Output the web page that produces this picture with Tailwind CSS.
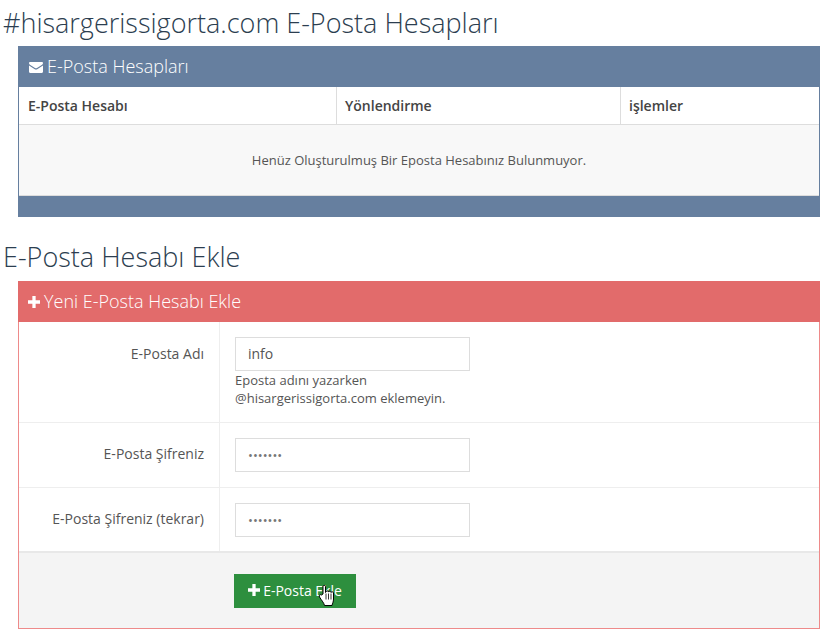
<!DOCTYPE html>
<html lang="tr">
<head>
<meta charset="utf-8">
<script src="https://cdn.jsdelivr.net/npm/@tailwindcss/browser@4"></script>
</head>
<body class="bg-white font-['Open_Sans',sans-serif] text-[14px] text-[#555] w-[829px] h-[639px] overflow-hidden relative">
<h1 class="h-[46px] pl-[3px] pt-[5px] text-[27px] leading-[36px] font-light text-[#2c3e50] whitespace-nowrap">#hisargerissigorta.com E-Posta Hesapları</h1>
<section class="ml-[18px] w-[802px] h-[171px] bg-[#667f9f] border-x border-b border-[#667f9f] flex flex-col">
  <div class="h-[41px] pl-[10px] flex items-center gap-[4px] text-white text-[18px] font-light">
    <svg class="w-[14px] h-[11px] mt-[2px]" viewBox="0 0 14 11" fill="#fff"><path d="M0 1.2C0 .5.5 0 1.2 0h11.6c.7 0 1.2.5 1.2 1.2 0 .6-.4 1.1-.9 1.5L8 6c-.6.4-1.4.4-2 0L.9 2.7C.4 2.3 0 1.8 0 1.2z"/><path d="M0 3.4V9.8c0 .7.5 1.2 1.2 1.2h11.6c.7 0 1.2-.5 1.2-1.2V3.4L8.6 7C7.600 7.700 6.400 7.700 5.400 7z"/></svg>
    <span>E-Posta Hesapları</span>
  </div>
  <div class="grid grid-cols-[318px_284px_1fr] h-[38px] bg-white border-b border-[#ddd] font-semibold text-[14px] text-[#444]">
    <div class="pl-[9px] flex items-center border-r border-[#ddd]">E-Posta Hesabı</div>
    <div class="pl-[8px] flex items-center border-r border-[#ddd]">Yönlendirme</div>
    <div class="pl-[8px] flex items-center">işlemler</div>
  </div>
  <div class="h-[71px] pt-[2px] bg-[#f8f8f8] border-b border-[#ddd] flex items-center justify-center text-[13px] text-[#555]">Henüz Oluşturulmuş Bir Eposta Hesabınız Bulunmuyor.</div>
</section>
<h2 class="h-[64px] pl-[3px] pt-[22px] text-[27px] leading-[36px] font-light text-[#2c3e50] whitespace-nowrap">E-Posta Hesabı Ekle</h2>
<section class="ml-[18px] w-[802px] h-[348px] bg-white border-x border-b border-[#ee8a8a] flex flex-col">
  <div class="-mx-px h-[41px] pl-[10px] bg-[#e26b6b] flex items-center gap-[4px] text-white text-[18px] font-light">
    <svg class="w-[12px] h-[12px] mt-[1px]" viewBox="0 0 11 11" fill="#fff"><path d="M4 0h3v4h4v3H7v4H4V7H0V4h4z"/></svg>
    <span>Yeni E-Posta Hesabı Ekle</span>
  </div>
  <form>
    <div class="grid grid-cols-[201px_1fr] h-[101px] border-b border-[#eee]">
      <div class="border-r border-[#eee] pr-[15px] pt-[23px] text-right leading-[18px]">E-Posta Adı</div>
      <div class="pl-[15px] pt-[15px]">
        <input class="block w-[235px] h-[34px] px-[12px] pb-[1px] border border-[#ddd] bg-white text-[14px] text-[#555]" value="info">
        <p class="text-[13px] leading-[18px] text-[#555]">Eposta adını yazarken<br>@hisargerissigorta.com eklemeyin.</p>
      </div>
    </div>
    <div class="grid grid-cols-[201px_1fr] h-[65px] border-b border-[#eee]">
      <div class="border-r border-[#eee] pr-[15px] pt-[22px] text-right leading-[18px]">E-Posta Şifreniz</div>
      <div class="pl-[15px] pt-[15px]"><input type="password" class="block w-[235px] h-[34px] px-[12px] border border-[#ddd] bg-white text-[13px] text-[#777]" value="1234567"></div>
    </div>
    <div class="grid grid-cols-[201px_1fr] h-[65px] border-b-2 border-[#e8e8e8]">
      <div class="border-r border-[#eee] pr-[15px] pt-[22px] text-right leading-[18px]">E-Posta Şifreniz (tekrar)</div>
      <div class="pl-[15px] pt-[15px]"><input type="password" class="block w-[235px] h-[34px] px-[12px] border border-[#ddd] bg-white text-[13px] text-[#777]" value="1234567"></div>
    </div>
    <div class="h-[75px] bg-[#f4f4f4] pl-[215px] pt-[21px]">
      <button type="button" class="relative w-[122px] h-[34px] pb-[2px] bg-[#2d8f3e] text-white text-[14px] flex items-center justify-center gap-[3px]">
        <svg class="w-[12px] h-[12px]" viewBox="0 0 11 11" fill="#fff"><path d="M4 0h3v4h4v3H7v4H4V7H0V4h4z"/></svg>
        <span>E-Posta Ekle</span>
        <svg class="absolute left-[84px] top-[9px] w-[17px] h-[25px]" viewBox="0 0 17 23"><path d="M5 10V2.500C5 1 7.500 1 7.500 2.500V8.500L8 8c0-1.500 2.500-1.500 2.500 0 0-1 2.500-1 2.500.500 .5-1 2.500-1 2.500.5V15c0 3-1 4-1.500 6.500H6.500C6 19 4 17 1.500 13 .5 11.500 2 10 3.500 11z" fill="#fff" stroke="#000" stroke-width="1"/><path d="M8 9.500v6M10.500 9.500v6M13 9.500v6" stroke="#000" stroke-width=".8"/></svg>
      </button>
    </div>
  </form>
</section>
</body>
</html>
